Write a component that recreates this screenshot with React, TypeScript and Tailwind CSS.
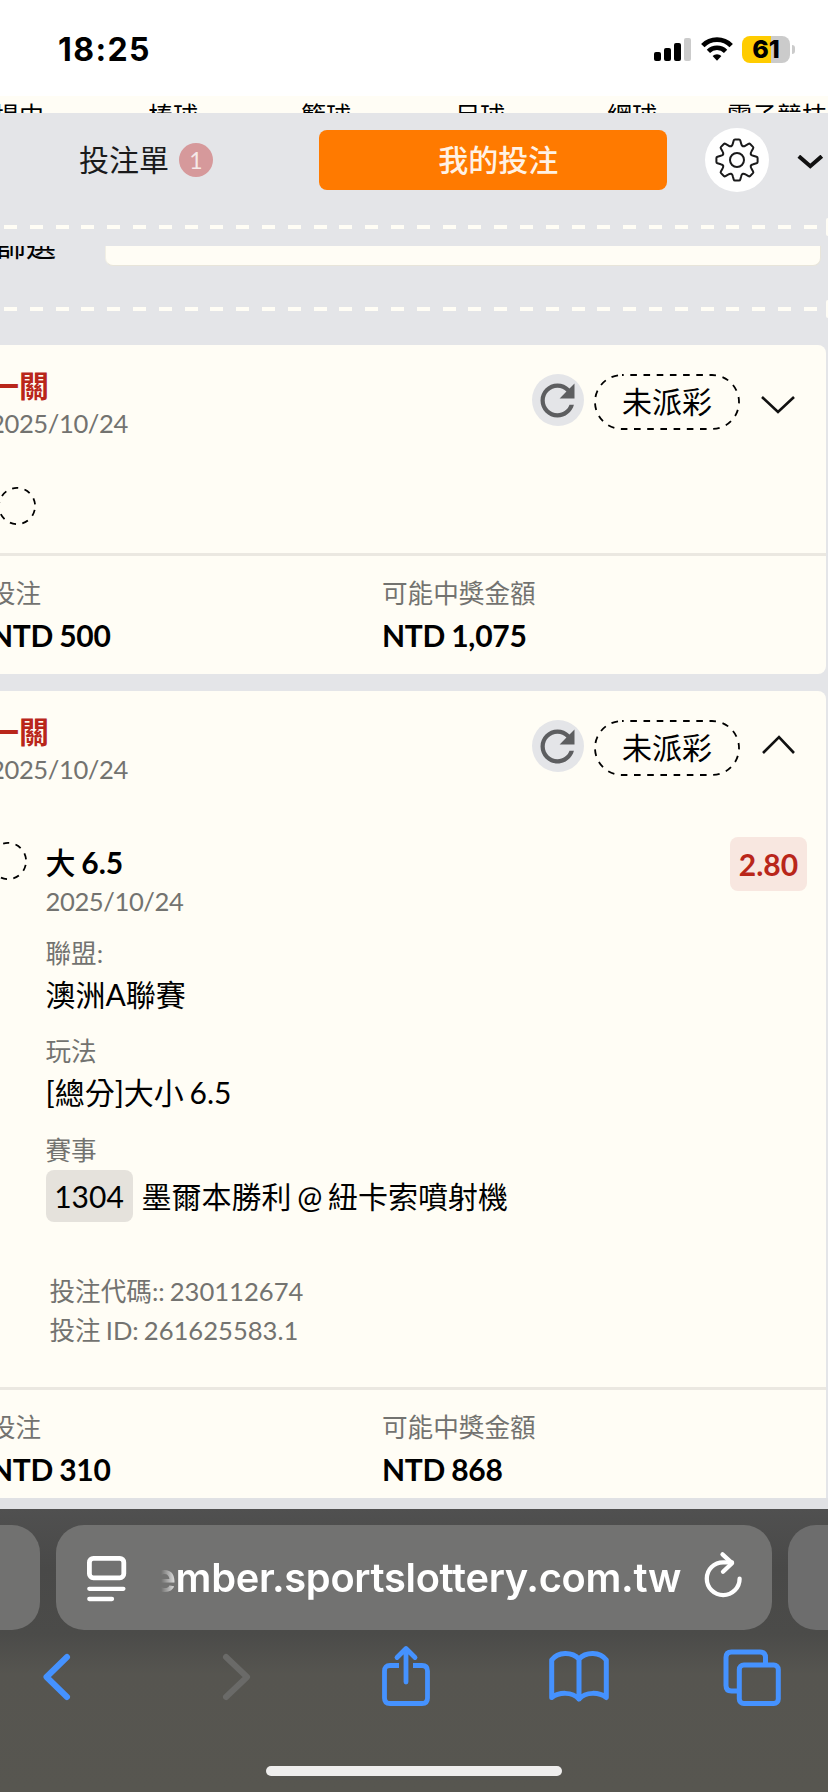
import type { ReactNode } from "react"

const sports = [
    { name: "場中", width: "w-[154px]" },
    { name: "棒球", width: "w-[153px]" },
    { name: "籃球", width: "w-[154px]" },
    { name: "足球", width: "w-[152px]" },
    { name: "網球", width: "w-[120px]" },
    { name: "電子競技", width: "w-[110px]" },
]

const StatusBar = () => (
    <div className="h-24 bg-white flex items-start justify-between pl-[58px] pr-[33px]">
        <span className="mt-[30px] font-['Inter'] text-[32px] leading-[39px] font-bold tracking-[1.4px] text-black">18:25</span>
        <div className="mt-9 flex items-start">
            <svg className="w-[38px] h-[27px]" viewBox="0 0 38 27">
                <rect x="0" y="16" width="7" height="9" rx="2" fill="#000" />
                <rect x="10" y="12" width="7" height="13" rx="2" fill="#000" />
                <rect x="20" y="7" width="7" height="18" rx="2" fill="#000" />
                <rect x="30" y="2" width="7" height="23" rx="2" fill="#cbcbcb" />
            </svg>
            <svg className="ml-[9px] w-8 h-[27px]" viewBox="0 0 32 27">
                <path d="M1.8 9.6A20 20 0 0 1 30.2 9.6" fill="none" stroke="#000" strokeWidth="4.8" />
                <path d="M7.4 15.3A12.2 12.2 0 0 1 24.6 15.3" fill="none" stroke="#000" strokeWidth="4.6" />
                <path d="M11.6 20.1a6.3 6.3 0 0 1 8.8 0L16 24.8z" fill="#000" />
            </svg>
            <div className="ml-[9px] w-12 h-[27px] rounded-[8px] overflow-hidden bg-[linear-gradient(90deg,#ffcc00_0_29px,#cbcbcb_29px)] text-center font-['Inter'] text-[25px] leading-[27px] font-extrabold text-black">
                61
            </div>
            <div className="ml-[2px] mt-[9px] w-[3px] h-[9px] rounded-r-full bg-[#cbcbcb]" />
        </div>
    </div>
)

const Gear = () => (
    <svg className="w-[44px] h-[44px]" viewBox="-22 -22 44 44" fill="none" stroke="#1a1a1b" strokeWidth="2" strokeLinecap="round" strokeLinejoin="round">
        {[0, 45, 90, 135, 180, 225, 270, 315].map((angle) => (
            <path
                key={angle}
                transform={`rotate(${angle})`}
                d="M-5.74 -13.86Q-4.6 -14.33 -4.2 -16.2L-3.3 -19.5Q-3 -20.6 -2 -20.6H2Q3 -20.6 3.3 -19.5L4.2 -16.2Q4.6 -14.33 5.74 -13.86"
            />
        ))}
        <circle r="7" />
    </svg>
)

const SlipHeader = () => (
    <div className="h-[104px] pt-[14px] flex items-start">
        <div className="w-[318.5px] h-[66px] pl-[79px] flex items-center">
            <span className="text-[30px] leading-[40px] text-[#1a1a1b] -translate-y-px">投注單</span>
            <span className="ml-[10px] w-[34px] h-[34px] rounded-full bg-[#d6999b] text-[#f5e9e8] text-[23px] leading-[34px] text-center">1</span>
        </div>
        <div className="mt-[3px] w-[348.5px] h-[60px] rounded-[8px] bg-[#ff7a00] text-[#fff2e5] text-[30px] leading-[58px] font-medium text-center pl-[11px]">
            我的投注
        </div>
        <div className="ml-[38px] w-[64px] h-[64px] rounded-full bg-white mt-px flex items-center justify-center">
            <Gear />
        </div>
        <svg className="ml-[28px] mt-[28px] w-[27px] h-[14px]" viewBox="0 0 27 14">
            <path d="M1.8 1.2L13.3 11.2L24.8 1.2" fill="none" stroke="#111" strokeWidth="4" />
        </svg>
    </div>
)

const TicketDivider = () => (
    <div className="h-[20px] flex items-center justify-between overflow-hidden pl-1">
        <div className="w-[815px] h-1 bg-[repeating-linear-gradient(90deg,#fffdf5_0_13px,transparent_13px_25.8px)]" />
        <div className="w-[2px] h-[18px] rounded-l-full bg-[#fffdf5]" />
    </div>
)

const FilterRow = () => (
    <div className="h-[20px] mt-[9px] flex items-end overflow-hidden">
        <span className="-ml-[4px] w-[109px] text-[30px] leading-[40px] text-black -translate-y-[2px]">篩選</span>
        <div className="w-[716px] h-[60px] rounded-[8px] bg-[#fffdf5] border border-t-0 border-[#e8e5da] border-l-[#f1efe5]" />
    </div>
)

const DashedCircle = () => (
    <svg className="w-[38px] h-[38px]" viewBox="0 0 38 38">
        <circle cx="19" cy="19" r="18.1" fill="none" stroke="#000" strokeWidth="1.8" strokeDasharray="6.2 6.435" strokeDashoffset="-4" />
    </svg>
)

const CardHeader = ({ open }: { open: boolean }) => (
    <div className="flex justify-between">
        <div className="pt-[22px]">
            <div className="-ml-px text-[30px] leading-[36px] font-bold text-[#b9261a]">一關</div>
            <div className="mt-[4px] text-[25.6px] leading-[32px] tracking-[-0.4px] text-[#737370]">2025/10/24</div>
        </div>
        <div className="pt-[29px] pr-[31px] flex items-start">
            <div className="w-[52px] h-[52px] rounded-full bg-[#e4e5e8]">
                <svg className="w-[51px] h-[51px] translate-y-px" viewBox="0 0 24 24" fill="#5d5e60">
                    <path d="M17.65 6.35C16.2 4.9 14.21 4 12 4c-4.42 0-7.99 3.58-7.99 8s3.57 8 7.99 8c3.73 0 6.84-2.55 7.73-6h-2.08c-.82 2.33-3.04 4-5.65 4-3.31 0-6-2.69-6-6s2.69-6 6-6c1.66 0 3.14.69 4.22 1.78L13 11h7V4l-2.35 2.35z" />
                </svg>
            </div>
            <div className="relative ml-[10px] w-[146px] h-[56px] text-center text-[30px] leading-[55px] text-black">
                <svg className="absolute inset-0 w-full h-full" viewBox="0 0 146 56">
                    <rect x="1" y="1" width="144" height="54" rx="27" fill="none" stroke="#000" strokeWidth="1.8" strokeDasharray="6.6 6.6" strokeDashoffset="4.9" />
                </svg>
                未派彩
            </div>
            <svg className={`${open ? "mt-[14px]" : "mt-[20px]"} ml-[21px] w-[34px] h-[20px]`} viewBox="0 0 34 20">
                <path d={open ? "M2 19L18 3L33 19" : "M1 3L17 18L33 3"} fill="none" stroke="#111" strokeWidth="2.6" />
            </svg>
        </div>
    </div>
)

const CardFooter = ({ stake, payout }: { stake: string; payout: string }) => (
    <div className="border-t-[3px] border-[#ebe8e1] pt-[21px] pb-[18px] flex">
        <div className="w-[392px]">
            <div className="text-[25.6px] leading-[32px] text-[#737370]">投注</div>
            <div className="mt-[6px] text-[30px] leading-[41px] font-bold tracking-[-0.25px] [word-spacing:-1px] text-black">{stake}</div>
        </div>
        <div>
            <div className="text-[25.6px] leading-[32px] text-[#737370]">可能中獎金額</div>
            <div className="mt-[6px] text-[30px] leading-[41px] font-bold tracking-[-0.25px] [word-spacing:-1px] text-black">{payout}</div>
        </div>
    </div>
)

const Field = ({ label, children }: { label: string; children: ReactNode }) => (
    <div className="pt-[21.5px]">
        <div className="text-[25.6px] leading-[32px] text-[#737370]">{label}</div>
        <div className="mt-[5px] text-[30px] leading-[40px] [word-spacing:-2px] text-black">{children}</div>
    </div>
)

const BrowserBar = () => (
    <div className="h-[283px] bg-[linear-gradient(180deg,#505050_0px,#494948_60px,#4b4b49_125px,#565550_165px,#575650_283px)]">
        <div className="pt-4 flex h-[121px] overflow-hidden">
            <div className="w-10 h-[105px] shrink-0 rounded-r-[28px] bg-[#717170]" />
            <div className="ml-4 w-[716px] h-[105px] shrink-0 rounded-[28px] bg-[#727271] flex items-start">
                <svg className="ml-[30px] mt-[30px] w-[41px] h-[48px]" viewBox="0 0 41 48">
                    <rect x="3.4" y="3.4" width="34.4" height="19.4" rx="4" fill="none" stroke="#fff" strokeWidth="4.8" />
                    <path d="M3.3 33.8H37.4M3.3 44H26" stroke="#fff" strokeWidth="4.3" strokeLinecap="round" />
                </svg>
                <div className="ml-[34px] w-[520px] h-[105px] flex justify-end overflow-hidden whitespace-nowrap font-['Inter'] text-[39.8px] leading-[106px] font-semibold tracking-[-0.3px] text-white [mask-image:linear-gradient(90deg,transparent_0px,#000_18px)]">
                    member.sportslottery.com.tw
                </div>
                <svg className="ml-[22px] mt-[24px] w-[42px] h-[52px]" viewBox="0 0 42 52">
                    <path d="M36.6 29.7A16.4 16.4 0 1 1 20.2 13.3L29 13.4" fill="none" stroke="#fff" strokeWidth="4.3" strokeLinecap="round" />
                    <path d="M19.5 5.4L29 14.2L20 22.8" fill="none" stroke="#fff" strokeWidth="4.3" strokeLinecap="round" strokeLinejoin="round" />
                </svg>
            </div>
            <div className="ml-4 w-[60px] h-[105px] shrink-0 rounded-l-[28px] bg-[#6d6d6d]" />
        </div>
        <div className="h-[136px] pt-[14px] pl-[40px] flex items-start text-[#4592ff]">
            <svg className="w-[34px] h-[64px]" viewBox="0 0 34 64" fill="none" stroke="currentColor" strokeWidth="6" strokeLinecap="round" strokeLinejoin="round">
                <path d="M27 13L6.5 33L27 53" />
            </svg>
            <svg className="ml-[146px] w-[34px] h-[64px] text-[#6a6a68]" viewBox="0 0 34 64" fill="none" stroke="currentColor" strokeWidth="6" strokeLinecap="round" strokeLinejoin="round">
                <path d="M6 13L27 33L6 53" />
            </svg>
            <svg className="ml-[126px] w-[52px] h-[64px]" viewBox="0 0 52 64" fill="none" stroke="currentColor" strokeWidth="4.8" strokeLinecap="round" strokeLinejoin="round">
                <path d="M19 21.5H10Q4.5 21.5 4.5 27V54Q4.5 59.5 10 59.5H42Q47.5 59.5 47.5 54V27Q47.5 21.5 42 21.5H33" strokeLinecap="butt" />
                <path d="M26 38V5M17 13.5L26 4.5L35 13.5" />
            </svg>
            <svg className="ml-[115px] w-[64px] h-[64px]" viewBox="0 0 64 64" fill="none" stroke="currentColor" strokeWidth="5" strokeLinecap="round" strokeLinejoin="round">
                <path d="M32 55V15C25 7.5 11 7.5 4.7 16V53.5C12 48 25 47.5 32 55C39 47.5 52 48 59.3 53.5V16C53 7.5 39 7.5 32 15" />
            </svg>
            <svg className="ml-[110px] w-[64px] h-[64px]" viewBox="0 0 64 64" fill="none" stroke="currentColor" strokeWidth="5">
                <rect x="18.3" y="21" width="39" height="38.5" rx="4.5" />
                <path d="M44.5 21V13.5Q44.5 8 39 8H10.5Q5 8 5 13.5V41.5Q5 47 10.5 47H18" />
            </svg>
        </div>
        <div className="mx-auto w-[296px] h-[10px] rounded-full bg-[#efeeed]" />
    </div>
)

const App = () => {
    return (
        <div className="w-[828px] h-[1792px] overflow-hidden bg-[#e4e5e8] font-['Lato','Noto_Sans_CJK_TC',sans-serif]">
            <StatusBar />

            {/* Sport tabs, scrolled under the bet slip header */}
            <div className="h-[17px] overflow-hidden bg-[#fffdf5] flex whitespace-nowrap">
                {sports.map((sport) => (
                    <div key={sport.name} className={`${sport.width} shrink-0 -translate-x-[6px] text-[25px] leading-[38px] text-black`}>
                        {sport.name}
                    </div>
                ))}
            </div>

            <SlipHeader />
            <TicketDivider />
            <FilterRow />
            <div className="mt-[33px]">
                <TicketDivider />
            </div>

            {/* Bets */}
            <div className="mt-[26px] h-[1153px] overflow-hidden pr-[2px]">
                <div className="-ml-[10px] h-[329px] rounded-r-[8px] bg-[#fffdf5]">
                    <CardHeader open={false} />
                    <div className="mt-[48px] mb-[28px] h-[38px] pl-[8px]">
                        <DashedCircle />
                    </div>
                    <CardFooter stake="NTD 500" payout="NTD 1,075" />
                </div>

                <div className="mt-[17px] -ml-[10px] rounded-tr-[8px] bg-[#fffdf5]">
                    <CardHeader open />
                    <div className="mt-[57px] flex items-start">
                        <div className="-ml-px w-[56.5px] shrink-0">
                            <DashedCircle />
                        </div>
                        <div className="flex-1">
                            <div className="text-[30px] leading-[40px] font-bold [word-spacing:-1.5px] text-black">
                                <span className="font-medium">大</span> 6.5
                            </div>
                            <div className="mt-[3px] -mb-[2px] text-[25.6px] leading-[32px] tracking-[-0.4px] text-[#737370]">2025/10/24</div>
                            <Field label="聯盟:">澳洲A聯賽</Field>
                            <Field label="玩法">[總分]大小 6.5</Field>
                            <Field label="賽事">
                                <div className="-mt-px flex items-center">
                                    <span className="w-[87px] h-[52px] rounded-[8px] bg-[#e5e2dc] leading-[52px] text-center">1304</span>
                                    <span className="ml-[9px]">墨爾本勝利 @ 紐卡索噴射機</span>
                                </div>
                            </Field>
                            <div className="mt-[50.5px] ml-[4px] text-[25.6px] leading-[38.5px] [word-spacing:-1.5px] text-[#737370]">
                                <p>投注代碼:: 230112674</p>
                                <p>投注 ID: 261625583.1</p>
                            </div>
                        </div>
                        <div className="-mt-[5px] mr-[19px] w-[77px] h-[54px] rounded-[8px] bg-[#f8e7e0] text-[#b9261a] text-[30px] leading-[54px] font-bold text-center">
                            2.80
                        </div>
                    </div>
                    <div className="mt-[38px]">
                        <CardFooter stake="NTD 310" payout="NTD 868" />
                    </div>
                </div>
            </div>

            <div className="h-[11px] bg-[#e0e1e4]" />
            <BrowserBar />
        </div>
    )
}

export default App
